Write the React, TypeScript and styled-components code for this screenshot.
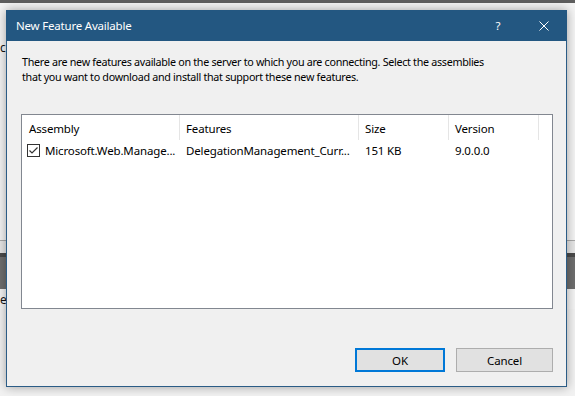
import React from 'react'
import styled, {createGlobalStyle} from 'styled-components'

const GlobalStyle = createGlobalStyle`
    html, body {
        margin: 0;
        padding: 0;
        width: 575px;
        height: 396px;
        overflow: hidden;
        font-family: "Noto Sans", "Liberation Sans", sans-serif;
    }
`

const Desktop = styled.div`
    position: relative;
    width: 575px;
    height: 396px;
    background: #f2f2f2;
    display: flex;
    flex-direction: column;
`

const TopEdge = styled.div`
    height: 3px;
    background: #5e5e5e;
`

const BackPane = styled.div<{ $h: number; $top?: number }>`
    height: ${p => p.$h}px;
    background: #f4f4f4;
    color: #111;
    font-size: 12px;
    line-height: 14px;
    padding-top: ${p => p.$top ?? 0}px;
    box-sizing: border-box;
`

const BackRule = styled.div`
    height: 1px;
    background: #a8a8a8;
`

const BackStrip = styled.div`
    height: 12px;
    background: #e6e6e6;
`

const DarkBand = styled.div`
    height: 36px;
    background: linear-gradient(#4a4a4a 0, #4a4a4a 4px, #6e6e6e 4px, #6e6e6e 100%);
`

const Dialog = styled.div`
    position: absolute;
    left: 6px;
    top: 10px;
    width: 561px;
    height: 377px;
    box-sizing: border-box;
    background: #f0f0f0;
    border: 1px solid #2b5c86;
    border-top: none;
    box-shadow: 0 0 10px rgba(0, 0, 0, 0.35);
    display: flex;
    flex-direction: column;
    font-family: "Noto Sans", "Liberation Sans", sans-serif;
    font-size: 10.75px;
    letter-spacing: -0.31px;
    color: #000;
`

const TitleBar = styled.div`
    height: 31px;
    margin: 0 -1px;
    background: #235781;
    color: #fff;
    display: flex;
    align-items: center;
    padding-left: 10px;
    font-size: 11.5px;
    letter-spacing: -0.2px;
`

const Title = styled.span`
    flex: 1;
`

const TitleButton = styled.div`
    width: 46px;
    height: 31px;
    display: flex;
    align-items: center;
    justify-content: center;
`

const Content = styled.div`
    flex: 1;
    display: flex;
    flex-direction: column;
    padding: 14px 13px 14px 14px;
`

const Intro = styled.p`
    margin: 0 0 0 1px;
    line-height: 15px;
    white-space: nowrap;
`

const ListBox = styled.div`
    margin-top: 29px;
    height: 195px;
    box-sizing: border-box;
    border: 1px solid #828790;
    background: #fff;
    font-size: 11.5px;
    letter-spacing: -0.15px;
`

const HeaderRow = styled.div`
    display: flex;
    height: 25px;
`

const HeaderCell = styled.div<{ $w: number; $pad?: number }>`
    width: ${p => p.$w}px;
    box-sizing: border-box;
    padding: 2px 0 0 ${p => p.$pad ?? 6}px;
    display: flex;
    align-items: center;
    border-right: 1px solid #e5e5e5;
`

const Row = styled.div`
    display: flex;
    height: 20px;
    align-items: center;
`

const Cell = styled.div<{ $w: number; $pad?: number }>`
    width: ${p => p.$w}px;
    box-sizing: border-box;
    padding-left: ${p => p.$pad ?? 6}px;
    display: flex;
    align-items: center;
    white-space: nowrap;
    overflow: hidden;
`

const Check = styled.span`
    width: 13px;
    height: 13px;
    flex: none;
    box-sizing: border-box;
    border: 1px solid #333;
    margin-right: 5px;
    display: flex;
    align-items: center;
    justify-content: center;
    background: #fff;
`

const Footer = styled.div`
    margin-top: auto;
    display: flex;
    justify-content: flex-end;
    gap: 11px;
`

const Button = styled.button<{ $primary?: boolean; $w: number }>`
    width: ${p => p.$w}px;
    height: 24px;
    box-sizing: border-box;
    background: #e1e1e1;
    border: ${p => (p.$primary ? '2px solid #0078d7' : '1px solid #adadad')};
    font-family: inherit;
    font-size: 11.5px;
    letter-spacing: -0.15px;
    color: #000;
    padding: 0;
`

const columns = [
    {title: 'Assembly', width: 158, pad: 7},
    {title: 'Features', width: 179},
    {title: 'Size', width: 90},
    {title: 'Version', width: 90},
]

const App: React.FC = () => {
    const assembly = 'Microsoft.Web.Manage...'
    const feature = 'DelegationManagement_Curr...'
    const size = '151 KB'
    const version = '9.0.0.0'

    return (
        <>
            <GlobalStyle/>
            <Desktop>
                <TopEdge/>
                <BackPane $h={237} $top={38}>c</BackPane>
                <BackRule/>
                <BackStrip/>
                <DarkBand/>
                <BackPane $h={20} $top={4}>e</BackPane>

                <Dialog>
                    <TitleBar>
                        <Title>New Feature Available</Title>
                        <TitleButton>?</TitleButton>
                        <TitleButton>
                            <svg width="10" height="10" viewBox="0 0 10 10">
                                <path d="M0.5 0.5L9.5 9.5M9.5 0.5L0.5 9.5" stroke="#fff" strokeWidth="1"/>
                            </svg>
                        </TitleButton>
                    </TitleBar>
                    <Content>
                        <Intro>
                            There are new features available on the server to which you are connecting. Select the assemblies
                            <br/>
                            that you want to download and install that support these new features.
                        </Intro>
                        <ListBox>
                            <HeaderRow>
                                {columns.map(c => (
                                    <HeaderCell key={c.title} $w={c.width} $pad={c.pad}>{c.title}</HeaderCell>
                                ))}
                            </HeaderRow>
                            <Row>
                                <Cell $w={158} $pad={5}>
                                    <Check>
                                        <svg width="11" height="11" viewBox="0 0 11 11">
                                            <path d="M1.5 5.5L4 8L9.5 2.5" stroke="#333" strokeWidth="1.2" fill="none"/>
                                        </svg>
                                    </Check>
                                    {assembly}
                                </Cell>
                                <Cell $w={179}>{feature}</Cell>
                                <Cell $w={90}>{size}</Cell>
                                <Cell $w={90}>{version}</Cell>
                            </Row>
                        </ListBox>
                        <Footer>
                            <Button $primary $w={90}>OK</Button>
                            <Button $w={97}>Cancel</Button>
                        </Footer>
                    </Content>
                </Dialog>
            </Desktop>
        </>
    )
}

export default App
